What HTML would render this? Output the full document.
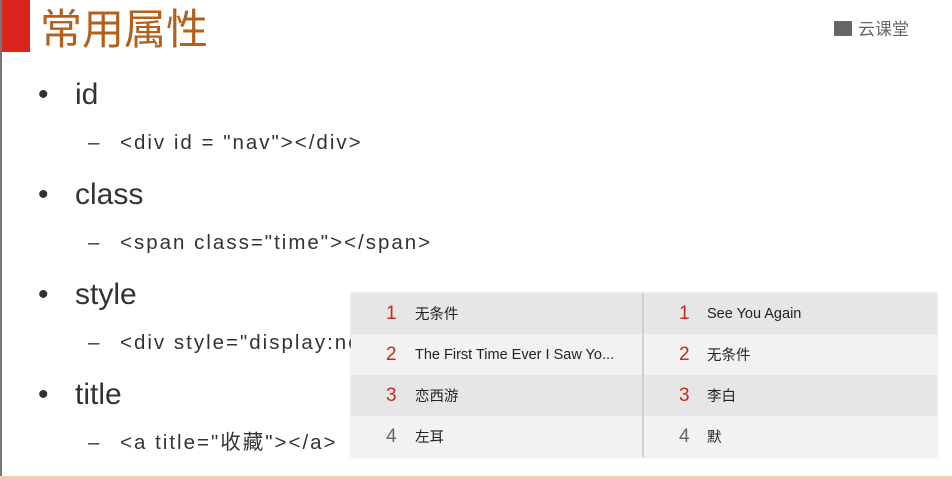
<!DOCTYPE html>
<html><head><meta charset="utf-8"><style>
body{margin:0;width:952px;height:479px;background:#fff;position:relative;overflow:hidden;font-family:"Liberation Sans","Noto Sans CJK SC",sans-serif}
.a{position:absolute;white-space:nowrap}
.b{font-size:30px;color:#333;line-height:36px}
.s{font-size:20.5px;color:#333;line-height:24px;letter-spacing:2px}
table{position:absolute;left:351px;top:293px;width:586px;border-collapse:collapse;table-layout:fixed;font-size:14.5px;color:#222;box-shadow:0 0 2px #ccc}
td{height:41px;padding:0;vertical-align:middle;overflow:hidden}
td.n{padding-left:35px;font-size:19px;color:#c8281e}
td.g{color:#666}
tr:nth-child(odd){background:#e6e6e6}
tr:nth-child(even){background:#f2f2f2}
td.d{border-left:2px solid #d0d0d0;padding-left:35px}
</style></head><body>
<div class="a" style="left:0;top:0;width:2px;height:479px;background:#777"></div>
<div class="a" style="left:2px;top:0;width:28px;height:52px;background:#d9261c"></div>
<div class="a" style="left:40px;top:4px;font-size:42px;line-height:52px;color:#b2601c">常用属性</div>
<div class="a" style="left:834px;top:21px;width:18px;height:15px;background:#666;border-radius:1px"></div>
<div class="a" style="left:858px;top:19px;font-size:17px;color:#666;line-height:22px">云课堂</div>
<div class="a b" style="left:38px;top:77px">•</div><div class="a b" style="left:75px;top:77px">id</div>
<div class="a s" style="left:88px;top:131px">–</div><div class="a s" style="left:120px;top:131px">&lt;div id = "nav"&gt;&lt;/div&gt;</div>
<div class="a b" style="left:38px;top:177px">•</div><div class="a b" style="left:75px;top:177px">class</div>
<div class="a s" style="left:88px;top:231px">–</div><div class="a s" style="left:120px;top:231px">&lt;span class="time"&gt;&lt;/span&gt;</div>
<div class="a b" style="left:38px;top:277px">•</div><div class="a b" style="left:75px;top:277px">style</div>
<div class="a s" style="left:88px;top:331px">–</div><div class="a s" style="left:120px;top:331px">&lt;div style="display:none"&gt;</div>
<div class="a b" style="left:38px;top:377px">•</div><div class="a b" style="left:75px;top:377px">title</div>
<div class="a s" style="left:88px;top:431px">–</div><div class="a s" style="left:120px;top:431px">&lt;a title="收藏"&gt;&lt;/a&gt;</div>
<table>
<colgroup><col style="width:64px"><col style="width:228px"><col style="width:64px"><col></colgroup>
<tr><td class="n">1</td><td>无条件</td><td class="n d">1</td><td>See You Again</td></tr>
<tr><td class="n">2</td><td>The First Time Ever I Saw Yo...</td><td class="n d">2</td><td>无条件</td></tr>
<tr><td class="n">3</td><td>恋西游</td><td class="n d">3</td><td>李白</td></tr>
<tr><td class="n g">4</td><td>左耳</td><td class="n g d">4</td><td>默</td></tr>
</table>
<div class="a" style="left:0;top:476px;width:952px;height:3px;background:#f4c9b8"></div>
</body></html>
